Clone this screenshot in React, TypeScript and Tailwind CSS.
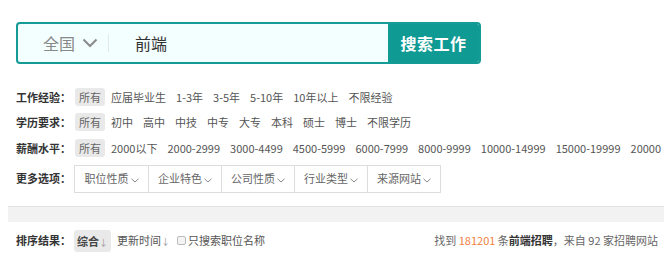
import React from "react";

const font = {
  fontFamily: '"Noto Sans CJK SC", "Noto Sans", sans-serif',
};

const experience = ["应届毕业生", "1-3年", "3-5年", "5-10年", "10年以上", "不限经验"];
const education = ["初中", "高中", "中技", "中专", "大专", "本科", "硕士", "博士", "不限学历"];
const salary = [
  "2000以下",
  "2000-2999",
  "3000-4499",
  "4500-5999",
  "6000-7999",
  "8000-9999",
  "10000-14999",
  "15000-19999",
  "20000",
];
const more = ["职位性质", "企业特色", "公司性质", "行业类型", "来源网站"];

const SmallChevron = () => (
  <svg width="8" height="5" viewBox="0 0 8 5" className="ml-[2px] mt-[3px]">
    <path d="M0.5 0.8 L4 4 L7.5 0.8" fill="none" stroke="#888" strokeWidth="1" />
  </svg>
);

const FilterRow = ({ label, items }: { label: string; items: string[] }) => (
  <div className="flex items-center h-[25.5px] whitespace-nowrap">
    <span className="w-[59px] shrink-0 font-bold text-[#333]">{label}：</span>
    <div className="flex items-center gap-[2px]">
      <span className="bg-[#e9e9e9] rounded-[3px] px-[4px] h-[18px] leading-[18px] text-[#666]">所有</span>
      {items.map((it) => (
        <span key={it} className="px-[4px] text-[#555] cursor-pointer">
          {it}
        </span>
      ))}
    </div>
  </div>
);

export default function App() {
  return (
    <div className="w-[672px] h-[274px] bg-white overflow-hidden text-[11px]" style={font}>
      {/* search */}
      <div className="pt-[22px] pl-4">
        <div className="flex w-[465px] h-[42px] border-2 border-[#149b96] rounded-[4px] overflow-hidden bg-[#f3fefe]">
          <div className="flex items-center flex-1">
            <span className="ml-[25px] text-[16px] text-[#888]">全国</span>
            <svg width="16" height="10" viewBox="0 0 16 10" className="ml-[7px]">
              <path d="M1.5 1.5 L8 8 L14.5 1.5" fill="none" stroke="#8a8a8a" strokeWidth="2" />
            </svg>
            <div className="ml-[10px] w-px h-[18px] bg-[#e2e8e8]" />
            <span className="ml-[26px] text-[16px] text-[#333]">前端</span>
          </div>
          <button className="w-[91px] bg-[#0f9a94] text-white text-[16px] font-bold tracking-[0.5px]">
            搜索工作
          </button>
        </div>
      </div>

      {/* filters */}
      <div className="mx-2 mt-[20px] overflow-hidden w-[654px]">
        <div className="pl-2">
          <FilterRow label="工作经验" items={experience} />
          <FilterRow label="学历要求" items={education} />
          <FilterRow label="薪酬水平" items={salary} />
          <div className="flex items-center mt-[4px] whitespace-nowrap">
            <span className="w-[58px] shrink-0 font-bold text-[#333]">更多选项：</span>
            <div className="flex border border-[#ddd] h-[28px]">
              {more.map((m, i) => (
                <div
                  key={m}
                  className={`flex items-center justify-center w-[73px] text-[#666] ${i > 0 ? "border-l border-[#ddd]" : ""}`}
                >
                  {m}
                  <SmallChevron />
                </div>
              ))}
            </div>
          </div>
        </div>
      </div>

      {/* band */}
      <div className="mx-2 mt-[13px] h-[16px] bg-[#f2f2f2] border-t border-[#e3e3e3]" />

      {/* sort row */}
      <div className="mx-2 pl-2 pr-[6px] mt-[8px] flex items-center justify-between whitespace-nowrap">
        <div className="flex items-center">
          <span className="w-[58px] font-bold text-[#333]">排序结果：</span>
          <span className="bg-[#e9e9e9] rounded-[3px] px-[3px] h-[22px] leading-[22px] text-[#444] font-bold">
            综合<span className="text-[9px] text-[#999] font-normal">↓</span>
          </span>
          <span className="ml-[6px] text-[#555]">
            更新时间<span className="text-[9px] text-[#999]">↓</span>
          </span>
          <span className="ml-[7px] flex items-center text-[#555]">
            <span className="inline-block w-[9px] h-[9px] border border-[#bbb] rounded-[2px] bg-[#f4f4f4] mr-[2px]" />
            只搜索职位名称
          </span>
        </div>
        <div className="text-[#666]">
          找到 <span className="text-[#f08040]">181201</span> 条<span className="text-[#333] font-bold">前端招聘</span>，来自 92 家招聘网站
        </div>
      </div>
    </div>
  );
}
